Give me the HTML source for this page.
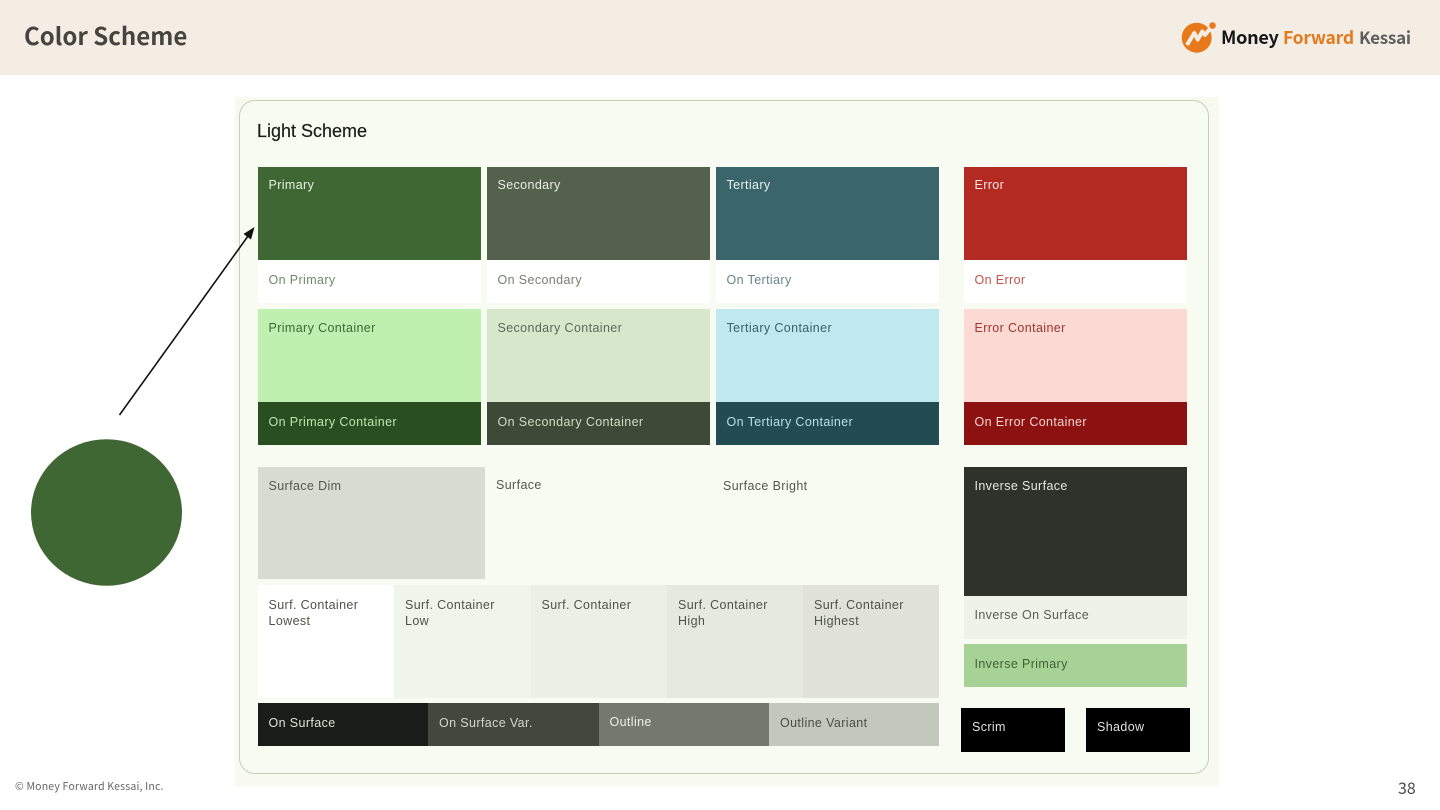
<!DOCTYPE html>
<html><head><meta charset="utf-8">
<style>
html,body{margin:0;padding:0;width:1440px;height:810px;overflow:hidden;background:#fff}
body{position:relative;font-family:"Liberation Sans",sans-serif}
.a{position:absolute;box-sizing:border-box}
.l{position:absolute;top:24px;font-weight:700;font-family:'Noto Sans CJK JP',sans-serif;line-height:27px;white-space:nowrap;letter-spacing:-.25px}
.b{position:absolute;box-sizing:border-box;padding-left:11px;font-size:12.5px;letter-spacing:.38px;line-height:16px;white-space:nowrap}
</style></head><body>
<div class="a" style="left:0;top:0;width:1440px;height:75px;background:#f4ede3"></div>
<div class="a" style="left:24px;top:16px;font:700 24px/38px 'Noto Sans CJK JP',sans-serif;color:#474440;white-space:nowrap">Color Scheme</div>
<svg class="a" style="left:1178px;top:18px" width="42" height="38" viewBox="0 0 42 38">
<circle cx="18.700" cy="19.700" r="15" fill="#e8791b"/>
<circle cx="34.500" cy="7.500" r="3.300" fill="#e8791b"/>
<path d="M9 27 L12 22 L16.300 15 L19.700 21.500 L24.300 13.500 L27 17 L32.500 10" fill="none" stroke="#f4ede3" stroke-width="4" stroke-linejoin="round"/>
</svg>
<div class="l" style="left:1221px;font-size:18px;color:#16161a">Money</div>
<div class="l" style="left:1283px;font-size:17.500px;color:#e27a20">Forward</div>
<div class="l" style="left:1359px;top:23px;font-size:17px;color:#5f5f5f">Kessai</div>

<div class="a" style="left:235px;top:97px;width:984px;height:689px;background:#f8faf0"></div>
<div class="a" style="left:239px;top:100px;width:970px;height:674px;border:1px solid #c6cdbb;border-radius:16px;background:#f8fbf1"></div>
<div class="a" style="left:257px;top:119px;font-size:18px;line-height:24px;color:#1a1c18;-webkit-text-stroke:.2px #1a1c18">Light Scheme</div>

<div class="b" style="left:257.500px;top:167px;width:223.500px;height:93px;background:#3f6733;color:#e6efe0;padding-top:10px">Primary</div>
<div class="b" style="left:486.500px;top:167px;width:223.500px;height:93px;background:#54624d;color:#e8ede2;padding-top:10px">Secondary</div>
<div class="b" style="left:715.500px;top:167px;width:223.500px;height:93px;background:#3a656a;color:#e6efef;padding-top:10px">Tertiary</div>
<div class="b" style="left:963.500px;top:167px;width:223.500px;height:93px;background:#b32a22;color:#f8e6e2;padding-top:10px">Error</div>

<div class="b" style="left:257.500px;top:260px;width:223.500px;height:43px;background:#fff;color:#6d8a64;padding-top:12px">On Primary</div>
<div class="b" style="left:486.500px;top:260px;width:223.500px;height:43px;background:#fff;color:#777f72;padding-top:12px">On Secondary</div>
<div class="b" style="left:715.500px;top:260px;width:223.500px;height:43px;background:#fff;color:#668689;padding-top:12px">On Tertiary</div>
<div class="b" style="left:963.500px;top:260px;width:223.500px;height:43px;background:#fff;color:#c4534c;padding-top:12px">On Error</div>

<div class="b" style="left:257.500px;top:309px;width:223.500px;height:93px;background:#c0f0b0;color:#3d6a36;padding-top:11px">Primary Container</div>
<div class="b" style="left:486.500px;top:309px;width:223.500px;height:93px;background:#d7e7cb;color:#5e6a57;padding-top:11px">Secondary Container</div>
<div class="b" style="left:715.500px;top:309px;width:223.500px;height:93px;background:#bfe9ee;color:#3c6267;padding-top:11px">Tertiary Container</div>
<div class="b" style="left:963.500px;top:309px;width:223.500px;height:93px;background:#fdd9d4;color:#99362f;padding-top:11px">Error Container</div>

<div class="b" style="left:257.500px;top:402px;width:223.500px;height:43px;background:#294e1f;color:#bde3af;padding-top:12px">On Primary Container</div>
<div class="b" style="left:486.500px;top:402px;width:223.500px;height:43px;background:#3d4a37;color:#cfdcc4;padding-top:12px">On Secondary Container</div>
<div class="b" style="left:715.500px;top:402px;width:223.500px;height:43px;background:#224c51;color:#b8dfe4;padding-top:12px">On Tertiary Container</div>
<div class="b" style="left:963.500px;top:402px;width:223.500px;height:43px;background:#8c1212;color:#f5d2cd;padding-top:12px">On Error Container</div>

<div class="b" style="left:257.500px;top:467px;width:227px;height:112px;background:#d8dbd1;color:#555850;padding-top:11px">Surface Dim</div>
<div class="b" style="left:485px;top:467px;width:227px;height:112px;color:#555850;padding-top:10px">Surface</div>
<div class="b" style="left:712px;top:467px;width:227px;height:112px;color:#555850;padding-top:11px">Surface Bright</div>

<div class="b" style="left:257.500px;top:585px;width:136.500px;height:113px;background:#fff;color:#50534b;padding-top:12px">Surf. Container<br>Lowest</div>
<div class="b" style="left:394px;top:585px;width:137px;height:113px;background:#f1f4ea;color:#50534b;padding-top:12px">Surf. Container<br>Low</div>
<div class="b" style="left:530.500px;top:585px;width:136.500px;height:113px;background:#ecefe5;color:#50534b;padding-top:12px">Surf. Container</div>
<div class="b" style="left:667px;top:585px;width:136.500px;height:113px;background:#e6e9df;color:#50534b;padding-top:12px">Surf. Container<br>High</div>
<div class="b" style="left:803px;top:585px;width:136px;height:113px;background:#e1e3da;color:#50534b;padding-top:12px">Surf. Container<br>Highest</div>

<div class="b" style="left:257.500px;top:703px;width:170.500px;height:43px;background:#191d17;color:#dfe1d8;padding-top:12px">On Surface</div>
<div class="b" style="left:428px;top:703px;width:170.500px;height:43px;background:#43483f;color:#d2d5cb;padding-top:12px">On Surface Var.</div>
<div class="b" style="left:598.500px;top:703px;width:170.500px;height:43px;background:#73796e;color:#eceee6;padding-top:11px">Outline</div>
<div class="b" style="left:769px;top:703px;width:170px;height:43px;background:#c3c8bc;color:#4a4e46;padding-top:12px">Outline Variant</div>

<div class="b" style="left:963.500px;top:467px;width:223.500px;height:129px;background:#2f312b;color:#e6e8df;padding-top:11px">Inverse Surface</div>
<div class="b" style="left:963.500px;top:596px;width:223.500px;height:43px;background:#eff2e8;color:#5a5d56;padding-top:11px">Inverse On Surface</div>
<div class="b" style="left:963.500px;top:644px;width:223.500px;height:43px;background:#a6d395;color:#3f6238;padding-top:12px">Inverse Primary</div>
<div class="b" style="left:961px;top:708px;width:104px;height:44px;background:#000;color:#e0e0e0;padding-top:11px">Scrim</div>
<div class="b" style="left:1086px;top:708px;width:104px;height:44px;background:#000;color:#e0e0e0;padding-top:11px">Shadow</div>

<svg class="a" style="left:0;top:200px" width="300" height="400" viewBox="0 200 300 400">
<circle cx="106.500" cy="512.500" r="75.500" fill="#3f6733" transform="translate(106.500 512.500) scale(1 .97) translate(-106.500 -512.500)"/>
<line x1="119.500" y1="415" x2="249.500" y2="234" stroke="#111" stroke-width="1.600"/>
<polygon points="254.500,227 251,239.500 243.500,234" fill="#111"/>
</svg>

<div class="a" style="left:15px;top:779px;font:10.500px/16px 'Noto Sans CJK JP',sans-serif;letter-spacing:.18px;color:#666;white-space:nowrap">© Money Forward Kessai, Inc.</div>
<div class="a" style="left:1398px;top:776px;font:16px/22px 'Noto Sans CJK JP',sans-serif;color:#4a4a4a">38</div>
</body></html>
